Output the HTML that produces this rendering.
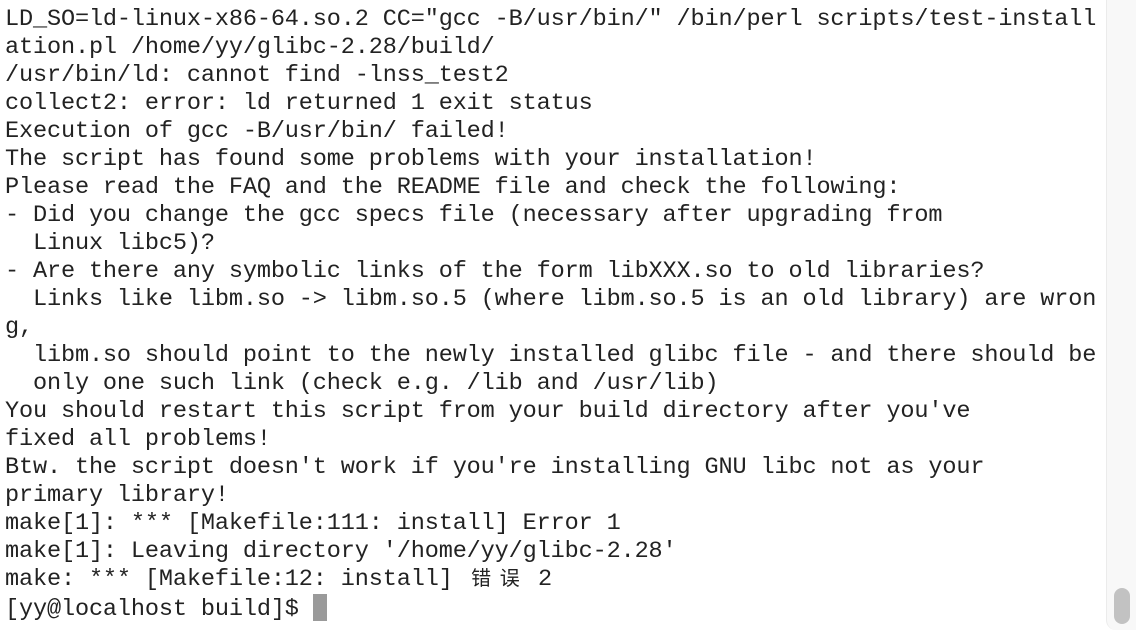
<!DOCTYPE html>
<html><head><meta charset="utf-8"><style>
html,body{margin:0;padding:0;}
body{width:1136px;height:630px;overflow:hidden;background:#fff;position:relative;}
pre{position:absolute;left:5px;top:6px;margin:0;font-family:"Liberation Mono","Noto Sans CJK SC",monospace;font-size:23.55px;letter-spacing:-0.14px;line-height:28px;color:#222;white-space:pre;}
.cj{display:inline-block;width:28.7px;text-align:center;font-family:"Noto Sans CJK SC",sans-serif;font-size:20px;line-height:0;vertical-align:baseline;}
.cur{display:inline-block;width:14px;height:27px;background:#9a9a9a;vertical-align:-6px;line-height:0;}
.track{position:absolute;left:1106px;top:0;width:30px;height:630px;background:#f8f8f8;border-left:1px solid #ebebeb;box-sizing:border-box;border-bottom-left-radius:10px;}
.thumb{position:absolute;left:1114px;top:588px;width:16px;height:36px;background:#c2c2c2;border-radius:8px;}
</style></head><body>
<pre>LD_SO=ld-linux-x86-64.so.2 CC="gcc -B/usr/bin/" /bin/perl scripts/test-install
ation.pl /home/yy/glibc-2.28/build/
/usr/bin/ld: cannot find -lnss_test2
collect2: error: ld returned 1 exit status
Execution of gcc -B/usr/bin/ failed!
The script has found some problems with your installation!
Please read the FAQ and the README file and check the following:
- Did you change the gcc specs file (necessary after upgrading from
  Linux libc5)?
- Are there any symbolic links of the form libXXX.so to old libraries?
  Links like libm.so -&gt; libm.so.5 (where libm.so.5 is an old library) are wron
g,
  libm.so should point to the newly installed glibc file - and there should be
  only one such link (check e.g. /lib and /usr/lib)
You should restart this script from your build directory after you've
fixed all problems!
Btw. the script doesn't work if you're installing GNU libc not as your
primary library!
make[1]: *** [Makefile:111: install] Error 1
make[1]: Leaving directory '/home/yy/glibc-2.28'
make: *** [Makefile:12: install] <span class="cj">错</span><span class="cj">误</span> 2
[yy@localhost build]$ <span class="cur"></span></pre>
<div class="track"></div>
<div class="thumb"></div>
</body></html>
